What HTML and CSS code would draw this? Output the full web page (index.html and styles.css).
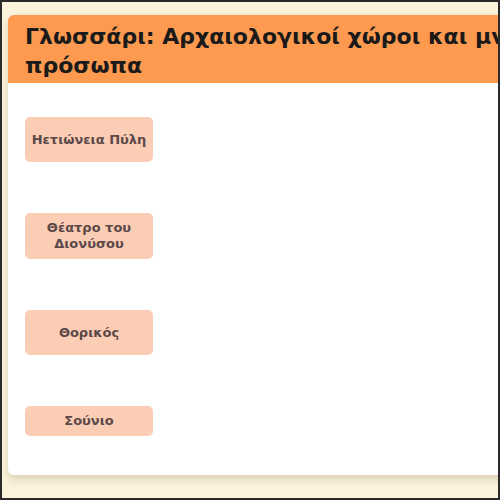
FILE: index.html
```html
<!DOCTYPE html>
<html lang="el">
<head>
<meta charset="utf-8">
<link rel="stylesheet" href="styles.css">
</head>
<body>
<div class="frame">
  <div class="card">
    <div class="header">
      <h1 class="title">Γλωσσάρι: Αρχαιολογικοί χώροι και μνημεία πρόσωπα</h1>
    </div>
    <div class="list">
      <div class="item tall">Ηετιώνεια Πύλη</div>
      <div class="item tall">Θέατρο του<br>Διονύσου</div>
      <div class="item tall">Θορικός</div>
      <div class="item">Σούνιο</div>
    </div>
  </div>
</div>
</body>
</html>
```
FILE: styles.css
```css
html, body {
  margin: 0;
  padding: 0;
}
body {
  width: 500px;
  height: 500px;
  overflow: hidden;
  font-family: "DejaVu Sans", "Noto Sans", sans-serif;
}
.frame {
  box-sizing: border-box;
  width: 500px;
  height: 500px;
  border: 2px solid #2a2a2a;
  background: #fcf3dd;
  padding: 13px 0 0 6px;
  overflow: hidden;
}
.card {
  width: 640px;
  height: 460px;
  background: #ffffff;
  border-radius: 6px;
  box-shadow: 0 4px 8px rgba(120, 100, 60, 0.25);
  overflow: hidden;
}
.header {
  background: #fe9a50;
  height: 68px;
  padding: 7px 0 0 17px;
  box-sizing: border-box;
}
.title {
  margin: 0;
  width: 600px;
  font-size: 22px;
  line-height: 29px;
  font-weight: 700;
  color: #1a1a1a;
}
.list {
  display: flex;
  flex-direction: column;
  align-items: flex-start;
  gap: 51px;
  padding: 34px 0 0 17px;
}
.item {
  box-sizing: border-box;
  width: 128px;
  padding: 7px 4px;
  background: #fbcdb5;
  border-radius: 5px;
  color: #5b4848;
  font-size: 13px;
  line-height: 16px;
  font-weight: 700;
  text-align: center;
  display: flex;
  align-items: center;
  justify-content: center;
}
.item.tall {
  min-height: 45px;
}
```
